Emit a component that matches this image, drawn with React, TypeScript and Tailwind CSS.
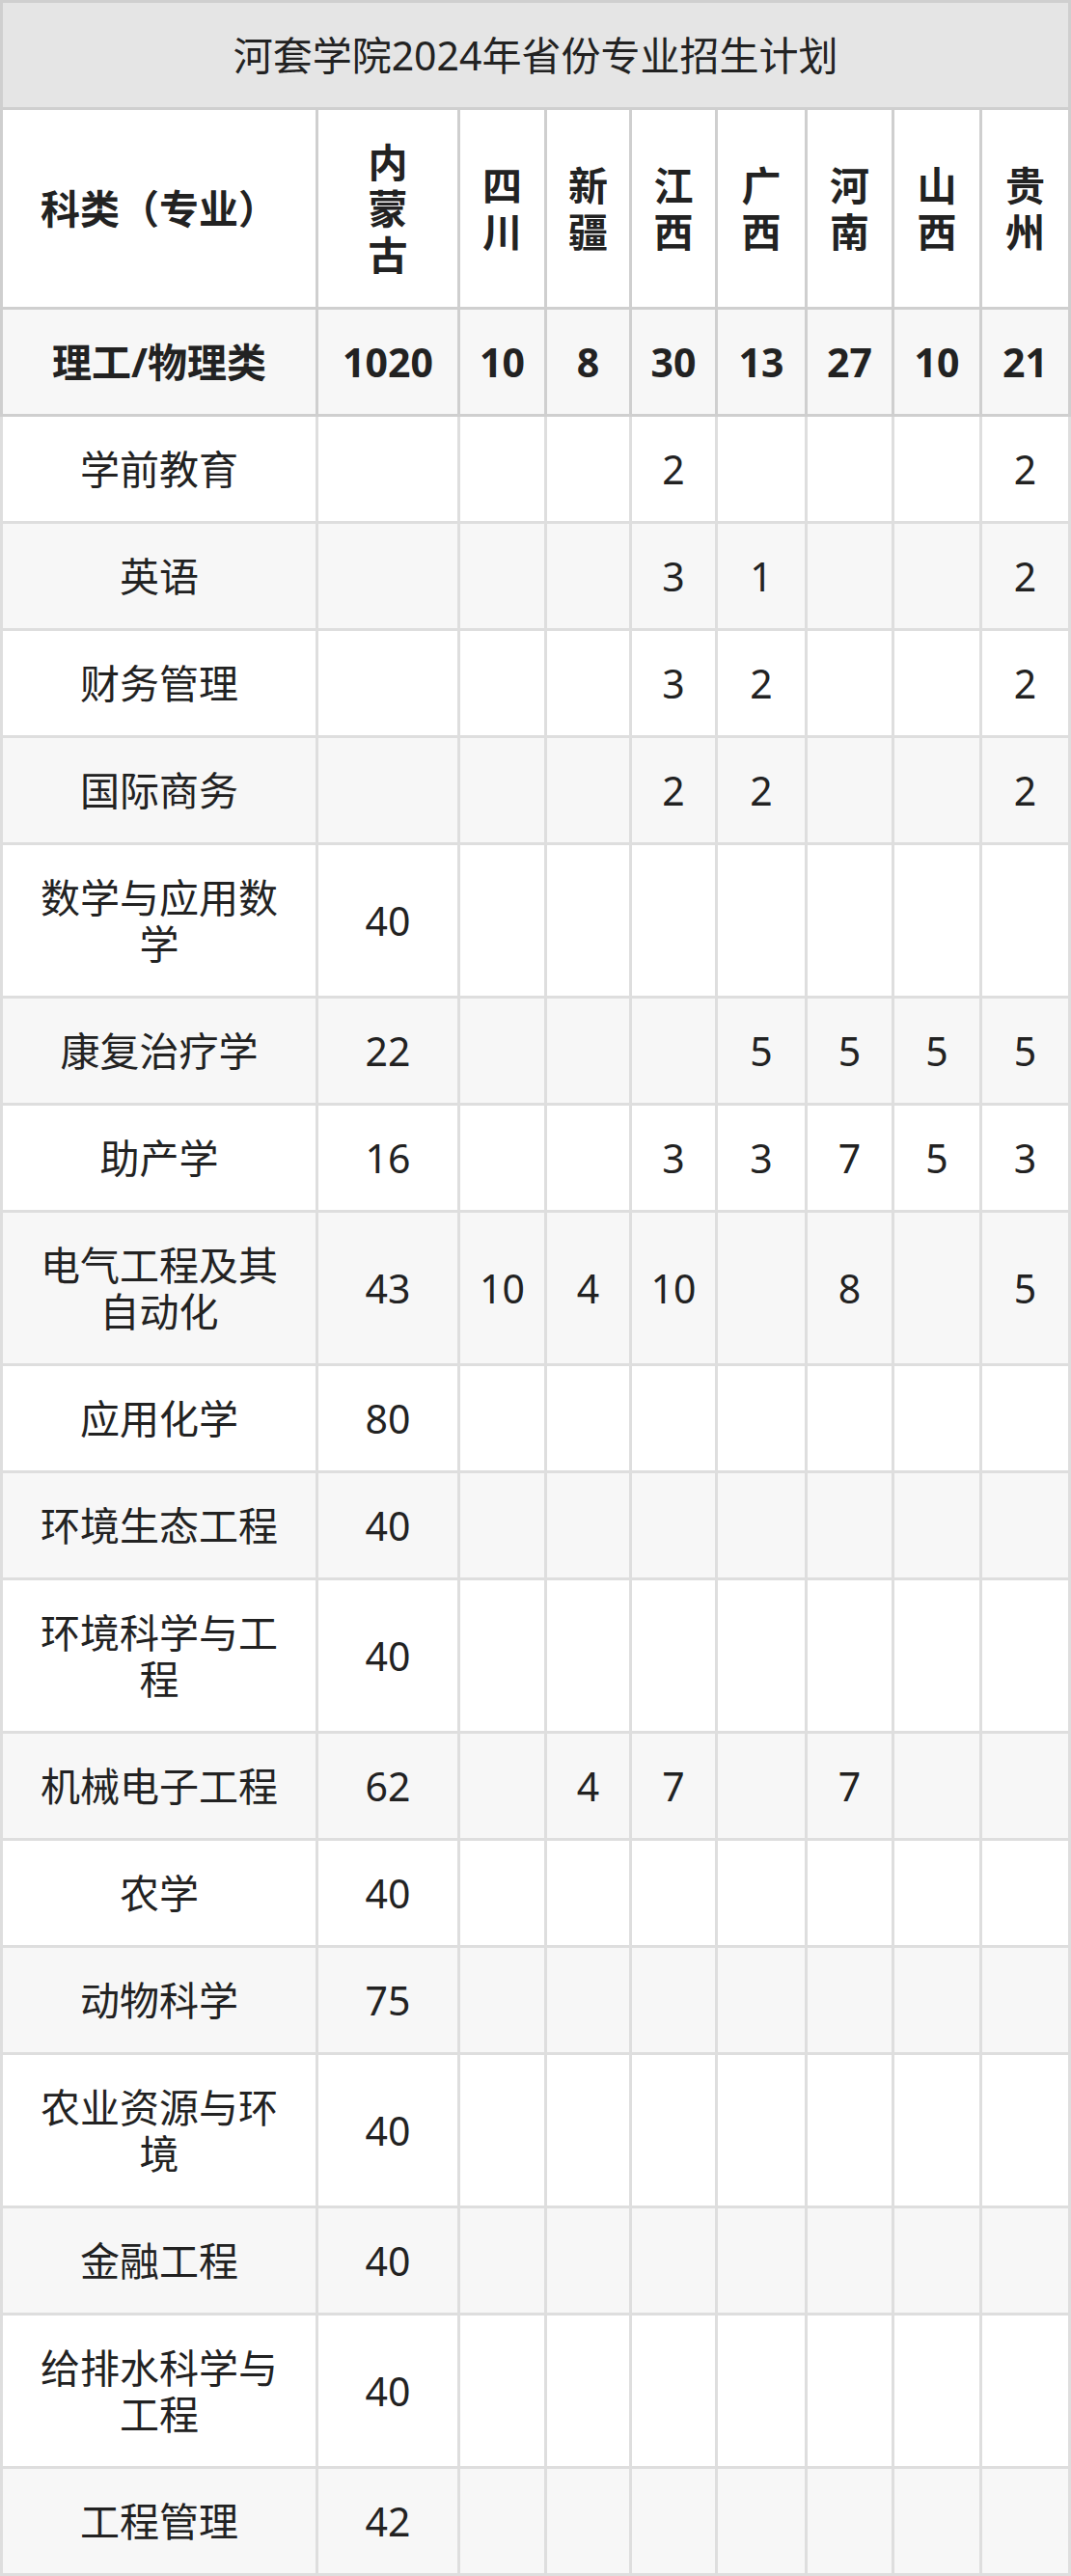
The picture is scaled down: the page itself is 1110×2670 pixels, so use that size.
import React from "react";

const provinces = ["内蒙古", "四川", "新疆", "江西", "广西", "河南", "山西", "贵州"];

// column widths measured from the screenshot (border centre to border centre)
const colWidths = ["w-[327px]", "w-[147px]", "w-[90px]", "w-[88px]", "w-[89px]", "w-[93px]", "w-[90px]", "w-[91px]", "w-[92px]"];

type Row = { name: string; counts: (number | null)[] };

const _ = null;

const rows: Row[] = [
  { name: "学前教育", counts: [_, _, _, 2, _, _, _, 2] },
  { name: "英语", counts: [_, _, _, 3, 1, _, _, 2] },
  { name: "财务管理", counts: [_, _, _, 3, 2, _, _, 2] },
  { name: "国际商务", counts: [_, _, _, 2, 2, _, _, 2] },
  { name: "数学与应用数学", counts: [40, _, _, _, _, _, _, _] },
  { name: "康复治疗学", counts: [22, _, _, _, 5, 5, 5, 5] },
  { name: "助产学", counts: [16, _, _, 3, 3, 7, 5, 3] },
  { name: "电气工程及其自动化", counts: [43, 10, 4, 10, _, 8, _, 5] },
  { name: "应用化学", counts: [80, _, _, _, _, _, _, _] },
  { name: "环境生态工程", counts: [40, _, _, _, _, _, _, _] },
  { name: "环境科学与工程", counts: [40, _, _, _, _, _, _, _] },
  { name: "机械电子工程", counts: [62, _, 4, 7, _, 7, _, _] },
  { name: "农学", counts: [40, _, _, _, _, _, _, _] },
  { name: "动物科学", counts: [75, _, _, _, _, _, _, _] },
  { name: "农业资源与环境", counts: [40, _, _, _, _, _, _, _] },
  { name: "金融工程", counts: [40, _, _, _, _, _, _, _] },
  { name: "给排水科学与工程", counts: [40, _, _, _, _, _, _, _] },
  { name: "工程管理", counts: [42, _, _, _, _, _, _, _] },
];

const totals = [1020, 10, 8, 30, 13, 27, 10, 21];

const headCell = "border-[3px] border-[#cfcfcf] py-[30px] text-center align-middle";
const bodyCell = "border-[3px] border-[#dedede] py-[30px] text-center align-middle";

export default function App() {
  return (
    <div className="w-[1110px] bg-white text-[41px] leading-[48px] text-[#222222] [font-family:'Noto_Sans','Noto_Sans_CJK_SC',sans-serif]">
      <table className="w-[1110px] table-fixed border-collapse">
        <colgroup>
          {colWidths.map((w, i) => (
            <col key={i} className={w} />
          ))}
        </colgroup>
        <thead>
          <tr className="bg-[#e5e5e5]">
            <th colSpan={9} className={`${headCell} font-normal`}>
              河套学院2024年省份专业招生计划
            </th>
          </tr>
          <tr className="bg-white">
            <th className={`${headCell} px-[20px] font-bold`}>
              科类<span className="inline-block w-[41px] text-right">（</span>专业<span className="inline-block w-[41px] text-left">）</span>
            </th>
            {provinces.map((p, i) => (
              <th key={p} className={`${headCell} ${i === 0 ? "px-[40px]" : "px-[18px]"} font-bold`}>
                {p}
              </th>
            ))}
          </tr>
          <tr className="bg-[#f7f7f7]">
            <th className={`${headCell} px-[20px] font-bold`}>理工/物理类</th>
            {totals.map((t, i) => (
              <th key={i} className={`${headCell} px-[4px] font-bold`}>
                {t}
              </th>
            ))}
          </tr>
        </thead>
        <tbody>
          {rows.map((row, index) => (
            <tr key={row.name} className={index % 2 === 0 ? "bg-white" : "bg-[#f7f7f7]"}>
              <td className={`${bodyCell} px-[37px]`}>{row.name}</td>
              {row.counts.map((c, i) => (
                <td key={i} className={`${bodyCell} px-[4px]`}>
                  {c ?? ""}
                </td>
              ))}
            </tr>
          ))}
        </tbody>
      </table>
    </div>
  );
}
